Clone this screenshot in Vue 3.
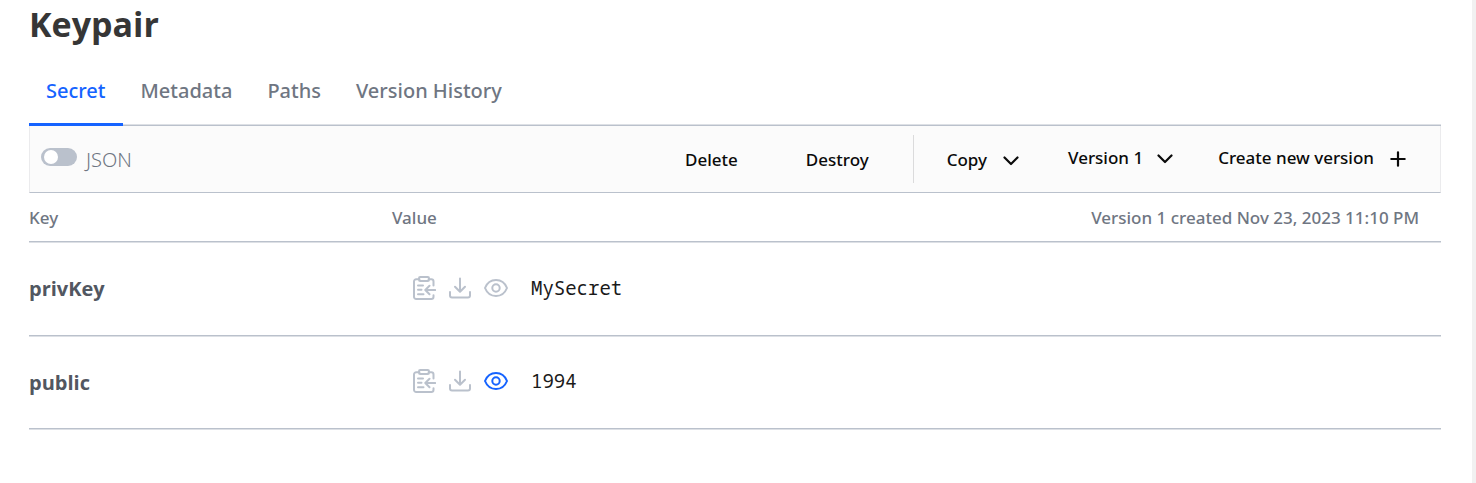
<script setup>
import { ref, reactive } from 'vue'

const tabs = ['Secret', 'Metadata', 'Paths', 'Version History']
const activeTab = ref('Secret')
const json = ref(false)
const secrets = reactive([
  { key: 'privKey', value: 'MySecret', active: false },
  { key: 'public', value: '1994', active: true },
])
</script>

<template>
  <div class="page">
    <main class="content">
      <h1 class="title">Keypair</h1>

      <nav class="tabs">
        <a
          v-for="tab in tabs"
          :key="tab"
          href="#"
          class="tab"
          :class="{ active: tab === activeTab }"
          @click.prevent="activeTab = tab"
        >{{ tab }}</a>
      </nav>

      <div class="toolbar">
        <label class="toggle">
          <input v-model="json" type="checkbox" role="switch" class="switch" />
          <span class="toggle-label">JSON</span>
        </label>
        <div class="actions">
          <button type="button" class="action delete">Delete</button>
          <button type="button" class="action destroy">Destroy</button>
          <span class="divider"></span>
          <button type="button" class="action copy">
            Copy
            <svg class="glyph" viewBox="0 0 16 16"><path d="M1.500 4.500 8 11l6.500-6.500" /></svg>
          </button>
          <button type="button" class="action version raised">
            Version 1
            <svg class="glyph" viewBox="0 0 16 16"><path d="M1.500 4.500 8 11l6.500-6.500" /></svg>
          </button>
          <button type="button" class="action create raised">
            Create new version
            <svg class="glyph" viewBox="0 0 16 16"><path d="M8 1.300v13.400M1.300 8h13.400" /></svg>
          </button>
        </div>
      </div>

      <table class="secrets">
        <thead>
          <tr>
            <th class="key-col">Key</th>
            <th class="value-col">Value</th>
            <th class="created">Version 1 created Nov 23, 2023 11:10 PM</th>
          </tr>
        </thead>
        <tbody>
          <tr v-for="item in secrets" :key="item.key">
            <td class="key">{{ item.key }}</td>
            <td colspan="2">
              <div class="value-cell">
                <button type="button" class="icon" aria-label="Copy value">
                  <svg viewBox="0 0 24 24">
                    <path d="M7.500 3.200H4.200A2.200 2.200 0 0 0 2 5.400v15.400A2.200 2.200 0 0 0 4.200 23h15.100a2.200 2.200 0 0 0 2.200-2.200v-1.600M16.500 3.200h2.800a2.200 2.200 0 0 1 2.200 2.200v4" />
                    <rect x="7" y="1" width="10" height="4" rx="1.200" />
                    <path d="M6 9.500h5M6 13.700h3.500M6 18.200h5.500M23.200 14H13.500M17.500 9.800 13.300 14l4.200 4.200" />
                  </svg>
                </button>
                <button type="button" class="icon" aria-label="Download value">
                  <svg viewBox="0 0 24 24">
                    <path d="M12 2.500v13M7 10.700l5 5 5-5M2 16v3.600a2 2 0 0 0 2 2h16a2 2 0 0 0 2-2V16" />
                  </svg>
                </button>
                <button
                  type="button"
                  class="icon"
                  :class="{ on: item.active }"
                  aria-label="Show value"
                  @click="item.active = !item.active"
                >
                  <svg viewBox="0 0 24 24">
                    <path d="M1 12c2-5 6.200-8 11-8s9 3 11 8c-2 5-6.200 8-11 8s-9-3-11-8Z" />
                    <circle cx="12" cy="12" r="3.700" />
                  </svg>
                </button>
                <code class="value">{{ item.value }}</code>
              </div>
            </td>
          </tr>
        </tbody>
      </table>
    </main>
    <div class="scroll-track"></div>
  </div>
</template>

<style>
body {
  background: #fff;
}
</style>

<style scoped>
.page {
  display: flex;
  min-height: 100vh;
  font-family: "Segoe UI", "Noto Sans", "Open Sans", sans-serif;
  box-sizing: border-box;
}
.content {
  flex: 1;
  min-width: 0;
  padding: 0 31px 0 29px;
}
.scroll-track {
  width: 4px;
  background: #f1f1f1;
}
.title {
  margin: 0;
  height: 56px;
  font-family: "Segoe UI", "Open Sans", sans-serif;
  font-size: 34px;
  line-height: 48px;
  font-weight: 700;
  color: #363636;
}
.tabs {
  display: flex;
  gap: 1px;
  height: 69px;
  border-bottom: 1px solid #bac1cc;
  box-shadow: inset 0 -1px #dde0e5;
}
.tab {
  display: flex;
  box-sizing: border-box;
  height: 70px;
  padding: 0 17px;
  font-size: 20px;
  line-height: 69px;
  font-weight: 500;
  color: #6f7682;
  text-decoration: none;
  border-bottom: 3px solid transparent;
}
.tab.active {
  color: #1563ff;
  border-bottom-color: #1563ff;
}
.toolbar {
  display: flex;
  justify-content: space-between;
  align-items: center;
  height: 66px;
  padding: 0 11px;
  background: #fbfbfb;
  border: 1px solid #ebebed;
  border-top: 0;
  border-bottom-color: #bac1cc;
}
.toggle {
  display: flex;
  align-items: center;
  gap: 9px;
}
.switch {
  appearance: none;
  width: 36px;
  height: 18px;
  margin: 0 0 4px;
  padding: 2px 3px;
  border-radius: 9px;
  background: #bac1cc;
}
.switch::before {
  content: "";
  display: block;
  width: 14px;
  height: 14px;
  border-radius: 50%;
  background: #fff;
}
.switch:checked {
  background: #1563ff;
}
.switch:checked::before {
  margin-left: 16px;
}
.toggle-label {
  padding-top: 2px;
  font-size: 20px;
  line-height: 28px;
  font-weight: 300;
  color: #6f7682;
}
.actions {
  display: flex;
  align-items: center;
}
.action {
  display: flex;
  align-items: center;
  gap: 16px;
  padding: 2px 0 0;
  border: 0;
  background: none;
  font-family: inherit;
  font-size: 17px;
  line-height: 24px;
  font-weight: 500;
  color: #0a0a0a;
  white-space: nowrap;
}
.destroy {
  margin-left: 68px;
}
.divider {
  width: 1px;
  height: 48px;
  margin: 0 33px 0 44px;
  background: #dbdbdc;
}
.version {
  gap: 14px;
  margin-left: 49px;
}
.create {
  margin: 0 23px 0 45px;
}
.raised {
  padding: 0 0 2px;
}
.glyph {
  width: 16px;
  height: 16px;
  margin-top: 2px;
  fill: none;
  stroke: currentColor;
  stroke-width: 2.2;
  stroke-linecap: round;
  stroke-linejoin: round;
}
.secrets {
  width: 100%;
  border-collapse: separate;
  border-spacing: 0;
  table-layout: fixed;
}
.secrets th {
  height: 46px;
  padding: 2px 0 0;
  font-size: 17px;
  line-height: 24px;
  font-weight: 500;
  text-align: left;
  color: #6f7682;
}
.secrets th,
.secrets td {
  border-bottom: 1px solid #bac1cc;
  box-shadow: 0 1px #dde0e5;
}
.key-col {
  width: 363px;
}
.value-col {
  width: 200px;
}
.secrets .created {
  padding-right: 22px;
  text-align: right;
}
.secrets td {
  height: 93px;
  padding: 0;
}
.secrets tbody tr:last-child td {
  height: 92px;
}
.secrets .key {
  font-family: "Segoe UI", "Open Sans", sans-serif;
  font-size: 20px;
  font-weight: 700;
  color: #525761;
}
.value-cell {
  display: flex;
  align-items: center;
  gap: 12px;
  padding: 0 0 2px 20px;
}
.icon {
  display: flex;
  padding: 0;
  border: 0;
  background: none;
  color: #bac1cc;
}
.icon.on {
  color: #1563ff;
}
.icon svg {
  width: 24px;
  height: 24px;
  fill: none;
  stroke: currentColor;
  stroke-width: 2;
  stroke-linecap: round;
  stroke-linejoin: round;
}
.value {
  margin-left: 11px;
  font-family: Consolas, "Noto Sans Mono", "DejaVu Sans Mono", monospace;
  font-size: 19px;
  line-height: 24px;
  color: #1a1a1a;
}
</style>
